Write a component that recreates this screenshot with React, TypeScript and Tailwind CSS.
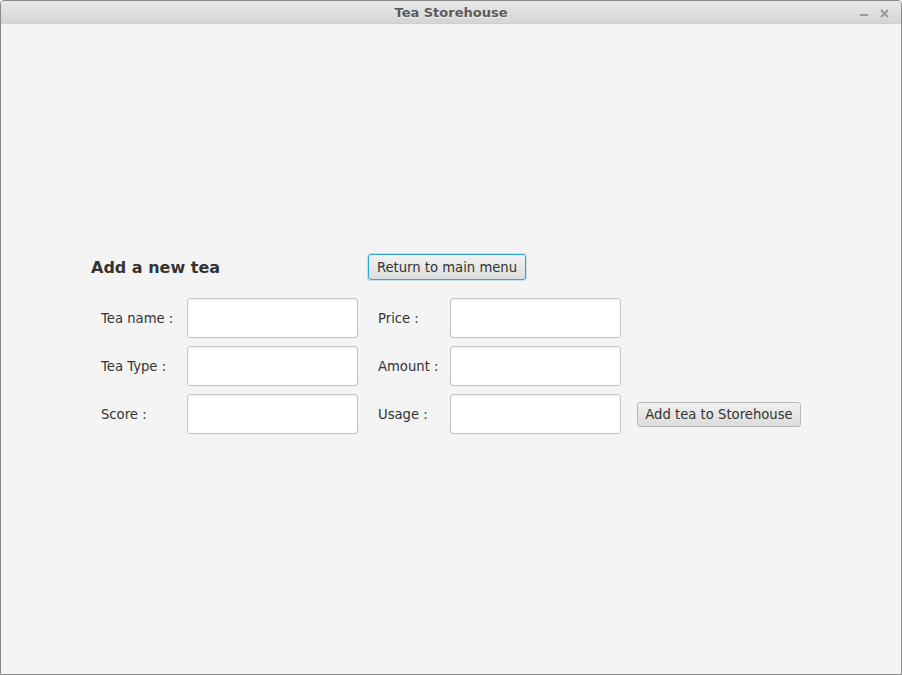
const font = { fontFamily: '"DejaVu Sans", "Liberation Sans", sans-serif' }

function Field({ label, labelWidth }: { label: string; labelWidth: string }) {
  return (
    <div className="flex items-center">
      <span className={`${labelWidth} pt-[2px] text-[13.2px] text-[#333333]`}>{label}</span>
      <input
        type="text"
        className="w-[171px] h-[40px] bg-white border border-[#c4c4c4] rounded-[3px] shadow-[inset_0_1px_2px_rgba(0,0,0,0.06)] outline-none px-2 text-[13px]"
      />
    </div>
  )
}

export default function App() {
  const rows = [
    ['Tea name :', 'Price :'],
    ['Tea Type :', 'Amount :'],
    ['Score :', 'Usage :'],
  ]

  return (
    <div
      className="w-[902px] h-[675px] flex flex-col bg-[#f4f4f4] border border-[#8a8a8a] rounded-t-[4px] overflow-hidden"
      style={font}
    >
      {/* Window title bar */}
      <div className="h-[23px] flex items-center relative bg-gradient-to-b from-[#e9e9e9] to-[#d5d5d5] border-b border-[#cfcfcf]">
        <span className="flex-1 pt-[2px] text-center text-[13px] font-bold text-[#5a5a5a] [text-shadow:0_1px_0_rgba(255,255,255,0.7)]">
          Tea Storehouse
        </span>
        <div className="absolute right-[12px] top-0 h-full flex items-center gap-[12px] pt-[2px]">
          <span className="w-[8px] h-[2px] bg-[#9a9a9a] mt-[4px]"></span>
          <svg width="9" height="9" viewBox="0 0 9 9">
            <path d="M1 1L8 8M8 1L1 8" stroke="#9a9a9a" strokeWidth="2" />
          </svg>
        </div>
      </div>

      {/* Content */}
      <div className="flex-1 relative pt-[230px] pl-[90px]">
        {/* faint backdrop panel */}
        <div className="absolute left-[307px] top-[226px] w-[288px] h-[330px] rounded-[6px] shadow-[0_0_6px_rgba(0,0,0,0.025)]"></div>

        <div className="relative flex flex-col">
          <div className="flex items-center h-[26px]">
            <h1 className="w-[277px] pt-[2px] text-[16px] font-bold text-[#333333]">Add a new tea</h1>
            <button className="w-[158px] h-[26px] pt-[1px] rounded-[3px] border border-[#2aa6d8] shadow-[0_0_0_1px_rgba(42,166,216,0.25)] bg-gradient-to-b from-[#f2f2f2] to-[#dcdcdc] text-[13.2px] text-[#333333]">
              Return to main menu
            </button>
          </div>

          <div className="flex flex-col gap-[8px] mt-[18px] pl-[10px]">
            {rows.map(([left, right], i) => (
              <div key={left} className="flex items-center">
                <Field label={left} labelWidth="w-[86px]" />
                <div className="ml-[20px]">
                  <Field label={right} labelWidth="w-[72px]" />
                </div>
                {i === 2 && (
                  <button className="ml-[16px] w-[164px] h-[25px] pt-[1px] rounded-[3px] border border-[#b8b8b8] bg-gradient-to-b from-[#f0f0f0] to-[#dcdcdc] text-[13.2px] text-[#333333]">
                    Add tea to Storehouse
                  </button>
                )}
              </div>
            ))}
          </div>
        </div>
      </div>
    </div>
  )
}
